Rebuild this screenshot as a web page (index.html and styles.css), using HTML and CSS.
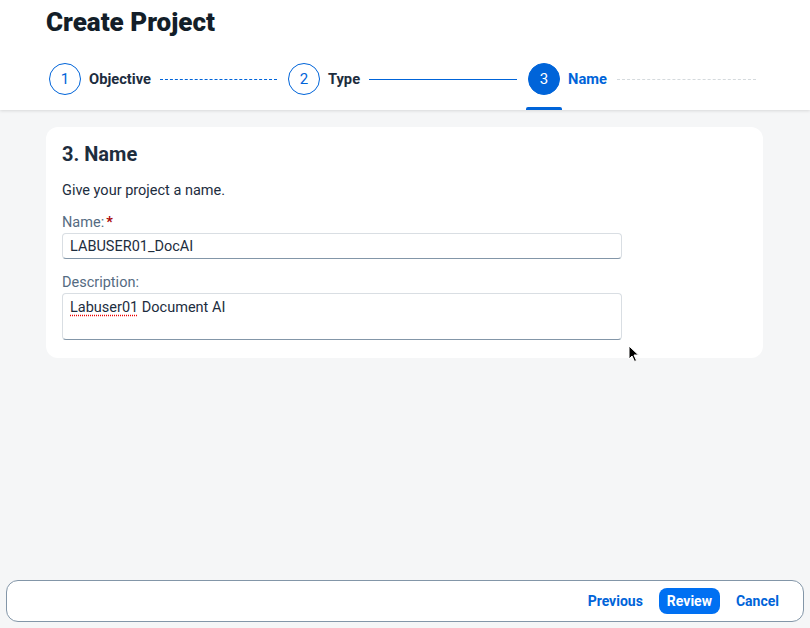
FILE: index.html
```html
<!DOCTYPE html>
<html>
<head>
<meta charset="utf-8">
<link rel="stylesheet" href="styles.css">
</head>
<body>
<div class="page">
  <header class="header">
    <h1 class="title">Create Project</h1>
    <div class="steps">
      <div class="step">
        <span class="circle">1</span>
        <span class="label">Objective</span>
      </div>
      <span class="line dashed"></span>
      <div class="step">
        <span class="circle">2</span>
        <span class="label">Type</span>
      </div>
      <span class="line solid"></span>
      <div class="step current">
        <span class="circle">3</span>
        <span class="label">Name</span>
      </div>
      <span class="line dotted"></span>
    </div>
  </header>

  <main class="content">
    <section class="card">
      <h2 class="card-title">3. Name</h2>
      <p class="intro">Give your project a name.</p>
      <label class="field-label">Name:<span class="req">*</span></label>
      <div class="input">LABUSER01_DocAI</div>
      <label class="field-label">Description:</label>
      <div class="input textarea"><span class="spell">Labuser01</span> Document AI</div>
      <svg class="cursor" width="12" height="18" viewBox="0 0 12 18">
        <path d="M1 1 L1 14 L4 11 L6.5 16.5 L8.5 15.5 L6 10 L10.5 10 Z" fill="#000" stroke="#fff" stroke-width="1"/>
      </svg>
    </section>
  </main>

  <footer class="footer">
    <button class="btn link">Previous</button>
    <button class="btn primary">Review</button>
    <button class="btn link">Cancel</button>
  </footer>
</div>
</body>
</html>
```

FILE: styles.css
```css
* { box-sizing: border-box; }
html, body { margin: 0; padding: 0; }
body {
  background: #f5f6f7;
  font-family: Roboto, "Noto Sans", sans-serif;
  color: #1d2d3e;
  width: 810px;
  height: 628px;
  overflow: hidden;
}
.page {
  display: flex;
  flex-direction: column;
  height: 628px;
}
.header {
  background: #fff;
  height: 110px;
  padding: 7px 0 0 46px;
  box-shadow: 0 1px 3px rgba(0,0,0,0.12);
  position: relative;
  z-index: 1;
}
.title {
  margin: 0;
  font-size: 26px;
  font-weight: 900;
  line-height: 30px;
  color: #131e29;
}
.steps {
  display: flex;
  align-items: center;
  margin-top: 26px;
  padding-left: 3px;
  height: 32px;
}
.step {
  display: flex;
  align-items: center;
  gap: 8px;
  position: relative;
  height: 32px;
}
.circle {
  width: 32px;
  height: 32px;
  border-radius: 50%;
  border: 1px solid #0064d9;
  color: #0064d9;
  display: flex;
  align-items: center;
  justify-content: center;
  font-size: 15px;
}
.label {
  font-size: 14.7px;
  font-weight: 700;
  color: #1d2d3e;
}
.step.current .circle {
  background: #0064d9;
  color: #fff;
}
.step.current .label { color: #0064d9; }
.step.current::after {
  content: "";
  position: absolute;
  left: -2px;
  width: 36px;
  top: 44px;
  height: 3px;
  background: #0064d9;
  border-radius: 2px 2px 0 0;
}
.line {
  height: 0;
  margin: 0 11px 0 9px;
}
.line.dashed { width: 117px; border-top: 1px dashed #0064d9; }
.line.solid { width: 148px; border-top: 1px solid #0064d9; }
.line.dotted { width: 139px; border-top: 1px dashed #d5dadd; margin-left: 10px; }

.content {
  flex: 1;
  padding: 17px 46px 0 46px;
}
.card {
  background: #fff;
  border-radius: 12px;
  width: 717px;
  height: 231px;
  padding: 14px 16px;
  position: relative;
}
.card-title {
  margin: 0;
  font-size: 20px;
  font-weight: 700;
  line-height: 26px;
}
.intro {
  margin: 15px 0 0;
  font-size: 14.5px;
  line-height: 18px;
}
.field-label {
  display: block;
  margin-top: 14px;
  font-size: 14.5px;
  line-height: 18px;
  color: #556b82;
}
.req { color: #aa0808; font-weight: 700; margin-left: 2px; }
.input {
  margin-top: 1px;
  width: 560px;
  height: 26px;
  border: 1px solid #d9dee3;
  border-bottom: 1px solid #8396a8;
  border-radius: 4px;
  padding: 4px 7px;
  font-size: 14.5px;
  line-height: 18px;
  color: #1d2d3e;
}
.input + .field-label { margin-top: 15px; }
.textarea {
  height: 47px;
  padding-top: 5px;
}
.spell {
  text-decoration: underline dotted #e00;
  text-underline-offset: 3px;
}
.cursor {
  position: absolute;
  left: 582px;
  top: 218px;
}
.footer {
  margin: 0 6px 6px 6px;
  height: 42px;
  background: #fff;
  border: 1px solid #8396a8;
  border-radius: 12px;
  display: flex;
  align-items: center;
  justify-content: flex-end;
  padding-right: 16px;
  gap: 8px;
}
.btn {
  font-family: inherit;
  font-size: 14px;
  font-weight: 700;
  border: none;
  background: none;
  height: 26px;
  padding: 0 8px;
  border-radius: 8px;
  color: #0064d9;
  cursor: pointer;
}
.btn.primary {
  background: #0070f2;
  color: #fff;
}
```
